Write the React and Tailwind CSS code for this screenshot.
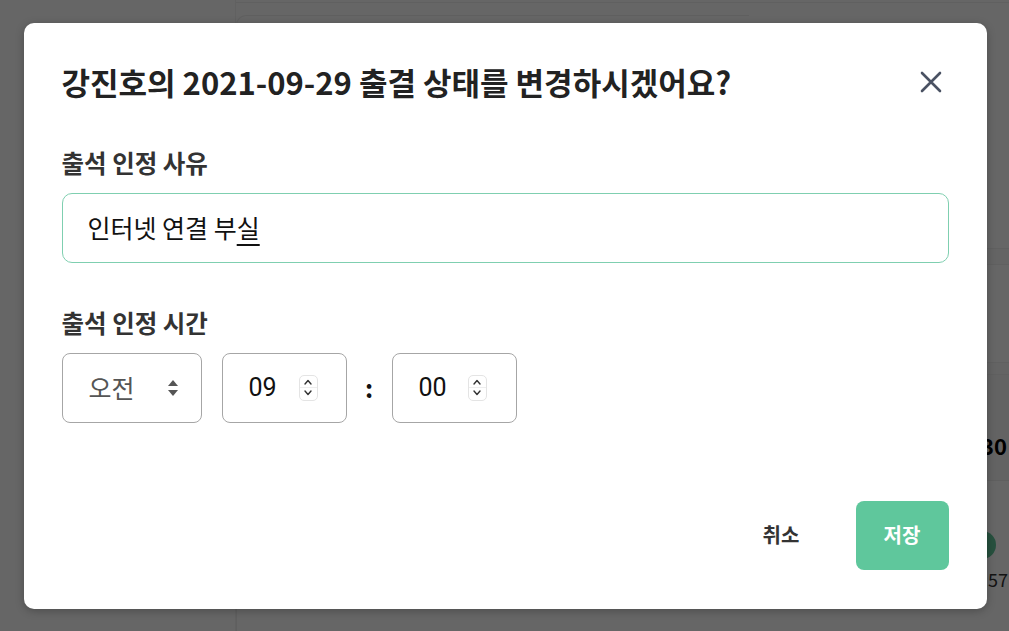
import React from "react";

const KR = { fontFamily: '"Noto Sans CJK KR", "Noto Sans", sans-serif' };

function Spinner() {
  return (
    <div className="flex h-[26px] w-[19px] flex-col items-center justify-center rounded-[5px] border border-[#e4e4e4] bg-white">
      <svg width="10" height="8" viewBox="0 0 10 8" className="mb-[1px]">
        <path d="M2 6 L5 2.5 L8 6" fill="none" stroke="#333" strokeWidth="1.4" strokeLinecap="round" strokeLinejoin="round" />
      </svg>
      <div className="h-px w-full bg-[#eeeeee]" />
      <svg width="10" height="8" viewBox="0 0 10 8" className="mt-[1px]">
        <path d="M2 2 L5 5.5 L8 2" fill="none" stroke="#333" strokeWidth="1.4" strokeLinecap="round" strokeLinejoin="round" />
      </svg>
    </div>
  );
}

export default function App() {
  return (
    <div className="relative h-[631px] w-[1009px] overflow-hidden bg-white" style={KR}>
      {/* underlying page */}
      <div className="flex h-full w-full">
        <aside className="w-[236px] border-r border-[#f2f2f2] bg-white" />
        <main className="flex flex-1 flex-col">
          <div className="h-[3px] border-b border-[#f0f0f0]" />
          <div className="mt-[12px] flex flex-1">
            <div className="flex-1 rounded-tl-[10px] border-l border-t border-[#eeeeee] bg-white" />
            <div className="flex w-[260px] flex-col">
              <div className="h-[233px]" />
              <div className="h-[17px] border-y border-[#f0f0f0] bg-[#fafafa]" />
              <div className="h-[97px]" />
              <div className="h-[13px] border-y border-[#f0f0f0] bg-[#fafafa]" />
              <div className="flex h-[105px] flex-col items-end justify-end bg-[#f7f7f7] pb-[20px] pr-[2px]">
                <span className="text-[22px] font-bold leading-[30px] text-black">09:30</span>
              </div>
              <div className="h-px bg-[#eeeeee]" />
              <div className="flex flex-col items-end pt-[50px]">
                <div className="mr-[13px] h-[28px] w-[28px] rounded-full bg-[#5fc79c]" />
                <span className="mr-[1px] mt-[8px] text-[18px] leading-[24px] text-[#333]">12:57</span>
              </div>
            </div>
          </div>
        </main>
      </div>

      {/* overlay */}
      <div className="absolute inset-0 flex items-center justify-center bg-black/60 pl-[1px]">
        <div className="flex h-[586px] w-[963px] flex-col rounded-[10px] bg-white px-[38px] pt-[39px] shadow-[0_2px_8px_rgba(0,0,0,0.25)]">
          <div className="flex h-[40px] items-center justify-between">
            <h1 className="text-[31px] font-bold leading-[40px] text-[#222]">
              강진호의 2021-09-29 출결 상태를 변경하시겠어요?
            </h1>
            <svg width="22" height="22" viewBox="0 0 22 22" className="mr-[7px]">
              <path d="M2 2 L20 20 M20 2 L2 20" stroke="#4a5263" strokeWidth="2.6" strokeLinecap="round" />
            </svg>
          </div>

          <div className="mt-[46px] text-[24.5px] font-bold leading-[30px] text-[#333]">출석 인정 사유</div>
          <div className="mt-[15px] flex h-[70px] items-center rounded-[10px] border-[1.5px] border-[#7fcfb0] px-[25px] text-[25px] text-[#111]">
            <span>
              인터넷 연결 부<span className="underline decoration-[1.5px] underline-offset-[6px]">실</span>
            </span>
          </div>

          <div className="mt-[45px] text-[24.5px] font-bold leading-[30px] text-[#333]">출석 인정 시간</div>
          <div className="mt-[15px] flex items-center">
            <div className="flex h-[70px] w-[140px] items-center rounded-[8px] border border-[#a6a6a6] pl-[26px] text-[25px] text-[#555]">
              <span>오전</span>
              <svg width="12" height="22" viewBox="0 0 12 22" className="ml-[32px]">
                <path d="M6 3 L11 9 L1 9 Z" fill="#555" />
                <path d="M6 19 L11 13 L1 13 Z" fill="#555" />
              </svg>
            </div>
            <div className="ml-[20px] flex h-[70px] w-[125px] items-center rounded-[8px] border border-[#a6a6a6] pl-[26px] text-[25px] text-[#111]">
              <span style={{ fontFamily: 'Roboto, "Noto Sans", sans-serif' }}>09</span>
              <div className="ml-[22px]">
                <Spinner />
              </div>
            </div>
            <div className="w-[45px] text-center text-[25px] font-bold text-[#111]">:</div>
            <div className="flex h-[70px] w-[125px] items-center rounded-[8px] border border-[#a6a6a6] pl-[26px] text-[25px] text-[#111]">
              <span style={{ fontFamily: 'Roboto, "Noto Sans", sans-serif' }}>00</span>
              <div className="ml-[21px]">
                <Spinner />
              </div>
            </div>
          </div>

          <div className="mt-[78px] flex items-center justify-end gap-[28px]">
            <button className="h-[69px] w-[93px] text-[20px] font-bold text-[#333]">취소</button>
            <button className="h-[69px] w-[93px] rounded-[8px] bg-[#5fc79c] text-[20px] font-bold text-white">저장</button>
          </div>
        </div>
      </div>
    </div>
  );
}
